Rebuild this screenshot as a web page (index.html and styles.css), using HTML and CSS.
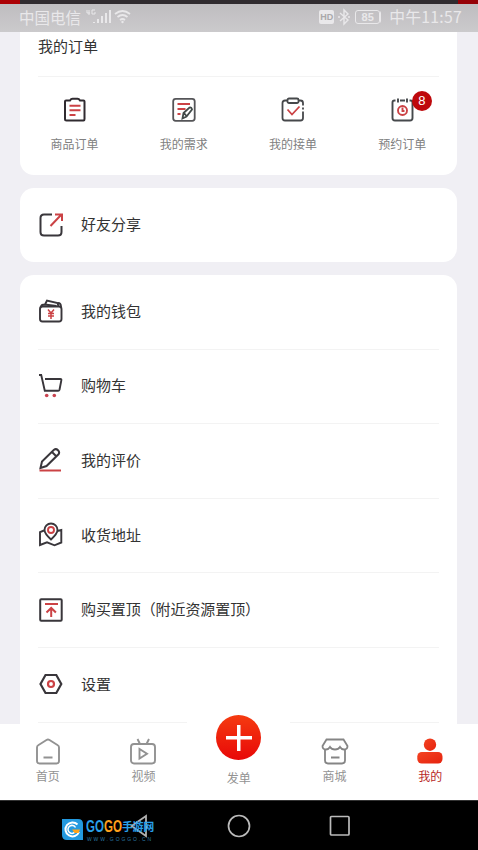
FILE: index.html
```html
<!DOCTYPE html>
<html lang="zh-CN">
<head>
<meta charset="utf-8">
<title>我的</title>
<link rel="stylesheet" href="styles.css">
</head>
<body>
<div class="phone">
  <div class="strip"></div>
  <header class="status">
    <span class="carrier">中国电信</span>
    <svg class="signal" width="49" height="20" viewBox="0 0 49 20" fill="none" stroke="currentColor"><path d="M3 3v3h3M5 3v5M11 3H8v4h3V5" stroke-width="1"/><path d="M10 16v-1M14 16v-4M18 16V9M22 16V6M26 16V3" stroke-width="2"/><path d="M31 7q7.500-6 15 0M33.500 10q5-4 10 0M36 13q2.500-2 5 0" stroke-width="1.700"/><circle cx="38.500" cy="15" r="1.200" fill="currentColor" stroke="none"/></svg>
    <span class="space"></span>
    <span class="hd">HD</span>
    <svg class="bt" width="12" height="18" viewBox="0 0 12 18" fill="none" stroke="currentColor" stroke-width="1.400"><path d="M2 5l8 7-4 4V2l4 4-8 7M0 9h2M10 9h2"/></svg>
    <span class="battery">85</span>
    <span class="clock">中午11:57</span>
  </header>

  <main class="content">
    <section class="card orders">
      <h1>我的订单</h1>
      <div class="order-grid">
        <div class="order"><svg width="26" height="26" viewBox="0 0 26 26" fill="none" stroke="#302b30" stroke-width="2"><path d="M8 3.500H4Q3 3.500 3 4.500V22q0 1.500 1.500 1.500h17Q22.500 23.500 22.500 22V4.500q0-1-1-1H18Q17 1.800 15.500 1.800h-5Q9 1.800 8 3.500z"/><path class="red" d="M7.500 8.700h11M7.500 13.300h11M7.500 18h6"/></svg><span>商品订单</span></div>
        <div class="order"><svg width="26" height="26" viewBox="0 0 26 26" fill="none" stroke="#555558" stroke-width="1.800"><rect x="2.200" y="1.800" width="21.500" height="22" rx="2.500"/><path class="red" d="M6.500 7h12.500M6.500 12h8M6.500 17h3"/><path d="M11.500 21.500l1-5.500 6-5.500q2-.5 2.500 2l-5.500 7zM13 16l2.500 3" fill="#fff" stroke="#414a49"/></svg><span>我的需求</span></div>
        <div class="order"><svg width="26" height="26" viewBox="0 0 26 26" fill="none" stroke="#46484b" stroke-width="1.800"><path d="M7 3.500H5q-2.500 0-2.500 2.500v15q0 2.500 2.500 2.500h15.500q2.500 0 2.500-2.500v-6.500M23 12.500v-2M23 8.500V6q0-2.500-2.500-2.500H19"/><rect x="7.500" y="1.500" width="11" height="4.500" rx="1.500"/><path class="red" d="M7.500 12.500l4.500 5 7.500-8"/></svg><span>我的接单</span></div>
        <div class="order"><svg width="26" height="26" viewBox="0 0 26 26" fill="none" stroke="#46494c" stroke-width="1.900"><path d="M6.500 3.500H5.500q-2 0-2 2V21q0 2.500 2.500 2.500h15q2.500 0 2.500-2.500V5.500q0-2-2-2h-1M11 3.500h5M9 1.500v4M18 1.500v4"/><circle class="red" cx="13.500" cy="13.500" r="4.500"/><path class="red" d="M13.500 10.500v3.500h2"/></svg><b class="badge">8</b><span>预约订单</span></div>
      </div>
    </section>

    <section class="card share">
      <div class="row"><svg width="26" height="26" viewBox="0 0 26 26" fill="none" stroke="#39363b" stroke-width="2"><path d="M14 2.500H6Q2.500 2.500 2.500 6v14q0 3.500 3.500 3.500h14q3.500 0 3.500-3.500v-6"/><path class="red" d="M12.500 14L23 3M17 2.500h7V9"/></svg><span>好友分享</span></div>
    </section>

    <section class="card list">
      <div class="row"><svg width="26" height="26" viewBox="0 0 26 26" fill="none" stroke="#39363b" stroke-width="1.900"><rect x="2" y="8.500" width="21.500" height="15" rx="2.500"/><path d="M3 9q0-2.500 4-2.500L9 2.500l10.500 2.500 1 3.500M6.500 6.500l12 1.500M20 5q3 0 3 4"/><path class="red" stroke-width="1.500" d="M10 11.500l3 3.500 3-3.500M10 15.500h6M10 18h6M13 15v6"/></svg><span>我的钱包</span></div>
      <div class="row"><svg width="26" height="26" viewBox="0 0 26 26" fill="none" stroke="#39363b" stroke-width="1.900"><path d="M1 2h2.200l3.600 15.800h13.400q1 0 1.300-1L23.300 7.500q.4-1.500-1-1.500H7"/><g class="dots"><circle cx="8.700" cy="22.500" r="1.800"/><circle cx="16.300" cy="22.500" r="1.800"/></g></svg><span>购物车</span></div>
      <div class="row"><svg width="26" height="26" viewBox="0 0 26 26" fill="none" stroke="#39363b" stroke-width="2"><path d="M2.500 21L4 14.500 16 2.800q2-1.500 4 .5t.5 4L8.500 19zM14 5l4.500 4.500"/><path class="red" d="M1.500 23.500H23"/></svg><span>我的评价</span></div>
      <div class="row"><svg width="26" height="26" viewBox="0 0 26 26" fill="none" stroke="#39363b" stroke-width="1.900"><path d="M6 8.500l-4 1.600V23l7-2.700 7.500 3 6.800-2.800V8l-4 1"/><path d="M13 17.500Q6.500 11.500 6.500 8a6.500 6.500 0 0 1 13 0q0 3.500-6.500 9.500z"/><circle class="red" cx="13" cy="8" r="3"/></svg><span>收货地址</span></div>
      <div class="row"><svg width="26" height="26" viewBox="0 0 26 26" fill="none" stroke="#39363b" stroke-width="2"><rect x="2.200" y="2.200" width="21.500" height="21.500" rx="1"/><path class="red" d="M7 7h13M13.200 20v-8M8.500 15.500l4.700-4.500 4.700 4.500"/></svg><span class="wide">购买置顶（附近资源置顶）</span></div>
      <div class="row"><svg width="26" height="26" viewBox="0 0 26 26" fill="none" stroke="#39363b" stroke-width="2.200"><path d="M7.500 4h10.800l5 9-5 9H7.500l-5-9z"/><circle class="red" cx="13" cy="13" r="3"/></svg><span>设置</span></div>
    </section>
  </main>

  <nav class="tabs">
    <div class="tab"><svg width="28" height="28" viewBox="0 0 28 28" fill="none" stroke="#929292" stroke-width="1.900"><path d="M3 10.500Q3 9 4.200 8.300L12.500 3q1.500-1 3 0l8.300 5.300Q25 9 25 10.500V24q0 2.500-2.500 2.500h-17Q3 26.500 3 24zM9.500 20.500h9"/></svg><span>首页</span></div>
    <div class="tab"><svg width="28" height="28" viewBox="0 0 28 28" fill="none" stroke="#929292" stroke-width="1.900"><rect x="2" y="7" width="24" height="19.500" rx="3"/><path d="M8.500 2l2.500 5M20 2l-2.500 5M10.500 12v9.500l7.500-4.800z"/></svg><span>视频</span></div>
    <div class="tab publish"><div class="plus"></div><span>发单</span></div>
    <div class="tab"><svg width="28" height="28" viewBox="0 0 28 28" fill="none" stroke="#858585" stroke-width="1.800"><path d="M4 13v10.500q0 3 3 3h14q3 0 3-3V13M10 20.500h8.500"/><path d="M5.500 2.500h17L26.500 9q0 3.500-3.500 3.500-2.500 0-4-2.500-1.500 2.500-5 2.500T9 10q-1.500 2.500-4 2.500-3.500 0-3.500-3.500z"/></svg><span>商城</span></div>
    <div class="tab active"><svg width="28" height="28" viewBox="0 0 28 28"><defs><linearGradient id="person" x1="0" y1="0" x2="1" y2="1"><stop offset="0" stop-color="#f44322"/><stop offset="1" stop-color="#e5230e"/></linearGradient></defs><circle cx="14" cy="7.700" r="6.200" fill="url(#person)"/><rect x="1.300" y="15" width="25.200" height="11.500" rx="4.500" fill="url(#person)"/></svg><span>我的</span></div>
  </nav>

  <footer class="system">
    <svg class="back" width="18" height="24" viewBox="0 0 18 24" fill="none" stroke="#b0b0b0" stroke-width="1.800"><path d="M16 2L1.500 12 16 22z"/></svg>
    <svg class="home" width="24" height="24" viewBox="0 0 24 24" fill="none" stroke="#bbb" stroke-width="1.700"><circle cx="12" cy="12" r="10.500"/></svg>
    <svg class="recent" width="22" height="22" viewBox="0 0 22 22" fill="none" stroke="#bbb" stroke-width="1.700"><rect x="1.500" y="1.500" width="18.500" height="18.500" rx="1"/></svg>
    <div class="watermark">
      <svg width="21" height="21" viewBox="0 0 21 21"><path d="M0 0h16q5 0 5 5v16H5q-5 0-5-5z" fill="#2399df"/><path d="M15.500 5.500A7 7 0 1 0 17 13" fill="none" stroke="#fff" stroke-width="2"/><path d="M13.500 8.500A4 4 0 1 0 13 13" fill="none" stroke="#fff" stroke-width="1.500"/><path d="M10 10.500h8l-1.500 3.500h-4z" fill="#ffa31a"/></svg>
      <div class="brand"><div class="name"><b class="go">GO</b><b class="go orange">GO</b><b class="cn">手游网</b></div><div class="url">WWW.GOGGO.CN</div></div>
    </div>
  </footer>
</div>
</body>
</html>
```
FILE: styles.css
```css
* { box-sizing: border-box; }

body {
  margin: 0;
  font-family: "Noto Sans CJK SC", sans-serif;
  color: #333;
}

svg { display: block; flex: none; }
.red { stroke: #cb4245; }
.dots { fill: #c94450; stroke: none; }

.phone {
  width: 478px;
  height: 850px;
  display: flex;
  flex-direction: column;
  background: #f0eff4;
  overflow: hidden;
}

.strip {
  height: 4px;
  flex: none;
  background: linear-gradient(90deg, #ac0004 20px, #302b2f 20px 458px, #960006 458px);
}

.status {
  height: 28px;
  flex: none;
  display: flex;
  align-items: center;
  padding: 0 16px 2px 19px;
  background: linear-gradient(#bfbdc0, #cbcacc);
  color: #e9e8ea;
  font-size: 15.5px;
  line-height: 26px;
}
.signal { margin-left: 3px; }
.space { flex: 1; }
.hd {
  width: 15px;
  height: 14px;
  border-radius: 2px;
  background: #e9e8ea;
  color: #aaa8aa;
  font: bold 9px/14px "Liberation Sans", sans-serif;
  text-align: center;
}
.bt { margin-left: 4px; }
.battery {
  width: 25px;
  height: 14px;
  margin: 0 9px 0 5px;
  border: 1.5px solid #e9e8ea;
  border-radius: 3px;
  font: bold 11px/12px "Liberation Sans", sans-serif;
  text-align: center;
  box-shadow: 2px 0 0 -1px #e9e8ea;
}
.clock { font-size: 15.8px; letter-spacing: .25px; white-space: nowrap; }

.content {
  height: 692px;
  flex: none;
  display: flex;
  flex-direction: column;
  gap: 13px;
  padding: 0 21px 0 20px;
  overflow: hidden;
}
.card { flex: none; background: #fff; border-radius: 14px; }

.orders { height: 143px; border-radius: 0 0 14px 14px; }
.orders h1 {
  height: 45px;
  margin: 0 18px;
  padding-top: 2px;
  border-bottom: 1px solid #f3f3f3;
  font-size: 15px;
  font-weight: 400;
  line-height: 24px;
}
.order-grid { display: grid; grid-template-columns: repeat(4, 1fr); padding-top: 20px; }
.order {
  position: relative;
  display: flex;
  flex-direction: column;
  align-items: center;
  gap: 12px;
  font-size: 12px;
  line-height: 18px;
  color: #808080;
}
.badge {
  position: absolute;
  left: 64px;
  top: -6px;
  width: 20px;
  height: 20px;
  border-radius: 50%;
  background: #be090c;
  color: #fff;
  font: 13px/20px "Liberation Sans", sans-serif;
  text-align: center;
}

.row {
  height: 74.6px;
  margin: 0 18px;
  padding-bottom: 1px;
  display: flex;
  align-items: center;
  gap: 17px;
  border-bottom: 1px solid #f3f3f3;
  font-size: 15px;
  line-height: 24px;
}
.row > span { padding-bottom: 1px; }
.share .row { height: 74px; border: 0; }
.list { border-radius: 14px 14px 0 0; height: 449px; }
.wide { letter-spacing: -.08px; }

.tabs {
  height: 76px;
  flex: none;
  display: grid;
  grid-template-columns: repeat(5, minmax(0, 1fr));
  background: #fff;
}
.tab {
  display: flex;
  flex-direction: column;
  align-items: center;
  gap: 1px;
  padding-top: 13px;
  font-size: 12px;
  line-height: 19px;
  color: #929292;
}
.active { color: #b82726; }
.publish {
  width: 103px;
  margin: -10px 0 0 -4px;
  padding-top: 1px;
  gap: 8px;
  background: #fff;
}
.plus {
  width: 45px;
  height: 45px;
  flex: none;
  border-radius: 50%;
  background:
    linear-gradient(#fff, #fff) center / 26px 3.5px no-repeat,
    linear-gradient(#fff, #fff) center / 3.5px 26px no-repeat,
    linear-gradient(#f53b10, #e80808);
}

.system {
  height: 50px;
  flex: none;
  position: relative;
  display: flex;
  align-items: center;
  padding-left: 130px;
  background: #000;
  border-top: 1px solid #333;
}
.home { margin-left: 79px; }
.recent { margin-left: 78px; }
.watermark { position: absolute; left: 62px; top: 18px; display: flex; gap: 3px; }
.brand { width: 70px; }
.name { display: flex; align-items: center; height: 15px; white-space: nowrap; }
.go {
  width: 18px;
  font: bold 17px/15px "Liberation Sans", sans-serif;
  color: #299fe9;
  transform: scaleX(.68);
  transform-origin: left;
}
.orange { color: #ffa11c; }
.cn { font-size: 11px; line-height: 13px; color: #299fe9; letter-spacing: -.4px; }
.url {
  padding: 3px 0 0 1px;
  font: 5px/5px "Liberation Sans", sans-serif;
  letter-spacing: 1.9px;
  color: #2a78a4;
  white-space: nowrap;
}
```
